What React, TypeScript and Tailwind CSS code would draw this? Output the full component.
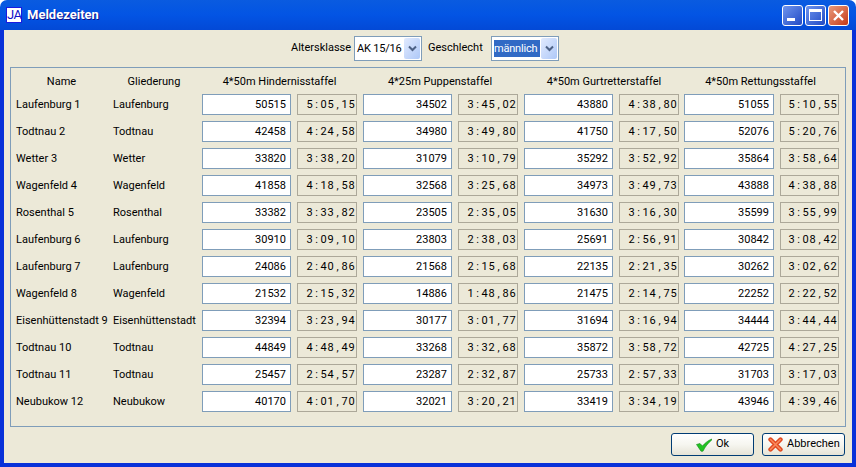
const rows = [
  ["Laufenburg 1", "Laufenburg", "50515", "5:05,15", "34502", "3:45,02", "43880", "4:38,80", "51055", "5:10,55"],
  ["Todtnau 2", "Todtnau", "42458", "4:24,58", "34980", "3:49,80", "41750", "4:17,50", "52076", "5:20,76"],
  ["Wetter 3", "Wetter", "33820", "3:38,20", "31079", "3:10,79", "35292", "3:52,92", "35864", "3:58,64"],
  ["Wagenfeld 4", "Wagenfeld", "41858", "4:18,58", "32568", "3:25,68", "34973", "3:49,73", "43888", "4:38,88"],
  ["Rosenthal 5", "Rosenthal", "33382", "3:33,82", "23505", "2:35,05", "31630", "3:16,30", "35599", "3:55,99"],
  ["Laufenburg 6", "Laufenburg", "30910", "3:09,10", "23803", "2:38,03", "25691", "2:56,91", "30842", "3:08,42"],
  ["Laufenburg 7", "Laufenburg", "24086", "2:40,86", "21568", "2:15,68", "22135", "2:21,35", "30262", "3:02,62"],
  ["Wagenfeld 8", "Wagenfeld", "21532", "2:15,32", "14886", "1:48,86", "21475", "2:14,75", "22252", "2:22,52"],
  ["Eisenhüttenstadt 9", "Eisenhüttenstadt", "32394", "3:23,94", "30177", "3:01,77", "31694", "3:16,94", "34444", "3:44,44"],
  ["Todtnau 10", "Todtnau", "44849", "4:48,49", "33268", "3:32,68", "35872", "3:58,72", "42725", "4:27,25"],
  ["Todtnau 11", "Todtnau", "25457", "2:54,57", "23287", "2:32,87", "25733", "2:57,33", "31703", "3:17,03"],
  ["Neubukow 12", "Neubukow", "40170", "4:01,70", "32021", "3:20,21", "33419", "3:34,19", "43946", "4:39,46"],
];

function Combo({ value, selected }: { value: string; selected?: boolean }) {
  return (
    <div className="w-[68px] h-[25px] bg-white border border-[#7f9db9] flex items-center pl-[2px] pr-[1px] gap-[1px]">
      <div className={`flex-1 h-[17px] leading-[17px] whitespace-nowrap tracking-[-0.2px] ${selected ? "bg-[#316ac5] text-white" : ""}`}>
        {value}
      </div>
      <div className="w-[16px] h-[21px] rounded-[2px] bg-gradient-to-br from-[#e1eafe] to-[#aec8f7] flex items-center justify-center">
        <svg width="9" height="7" viewBox="0 0 9 7">
          <path d="M1 1.5 L4.5 5 L8 1.5" fill="none" stroke="#4d6185" strokeWidth="2" />
        </svg>
      </div>
    </div>
  );
}

function Button({ label, icon, pad }: { label: string; icon: React.ReactNode; pad: string }) {
  return (
    <div className={`w-[83px] h-[23px] rounded-[3px] border border-[#003c74] bg-gradient-to-b from-white via-[#f6f6f0] to-[#e6e3d6] flex items-center gap-[4px] ${pad}`}>
      {icon}
      <span>{label}</span>
    </div>
  );
}

function Cell({ value, time, cls, inputCls, timeCls }: { value: string; time: string; cls: string; inputCls: string; timeCls: string }) {
  return (
    <div className={`flex gap-[6px] shrink-0 ${cls}`}>
      <div className={`h-[21px] bg-white border border-[#7f9db9] text-right pr-[4px] leading-[20px] ${inputCls}`}>
        {value}
      </div>
      <div className={`h-[21px] border border-[#aca899] flex justify-end pr-[1px] leading-[20px] ${timeCls}`}>
        {time.split("").map((ch, k) => (
          <span key={k} className="w-[7px] text-center">
            {ch}
          </span>
        ))}
      </div>
    </div>
  );
}

export default function App() {
  return (
    <div
      className="w-[856px] h-[467px] flex flex-col overflow-hidden text-[11px] text-black"
      style={{ fontFamily: 'Roboto, "Noto Sans", sans-serif' }}
    >
      <div className="h-[30px] shrink-0 rounded-t-[7px] bg-gradient-to-b from-[#0a5be0] via-[#0354e4] to-[#0349d6] flex items-center pl-[6px] pr-[7px] bg-[#0354e4]">
        <div className="w-[16px] h-[16px] bg-white border border-[#1a1ae0] text-[#1010c8] text-[13px] leading-[14px] text-center tracking-[-0.5px]">
          JA
        </div>
        <div className="ml-[5px] text-white font-bold text-[13px] [text-shadow:1px_1px_0_#0f1089]">Meldezeiten</div>
        <div className="ml-auto flex gap-[2px]">
          <div className="w-[21px] h-[21px] rounded-[3px] border border-white bg-gradient-to-br from-[#6f94ee] to-[#2349c4] flex items-end pl-[4px] pb-[4px]">
            <div className="w-[8px] h-[3px] bg-white" />
          </div>
          <div className="w-[21px] h-[21px] rounded-[3px] border border-white bg-gradient-to-br from-[#6f94ee] to-[#2349c4] flex items-center justify-center">
            <div className="w-[13px] h-[12px] border border-t-[3px] border-white" />
          </div>
          <div className="w-[21px] h-[21px] rounded-[3px] border border-white bg-gradient-to-br from-[#e8997a] to-[#c5350f] flex items-center justify-center">
            <svg width="13" height="13" viewBox="0 0 13 13">
              <path d="M2 2 L11 11 M11 2 L2 11" stroke="white" strokeWidth="2.4" />
            </svg>
          </div>
        </div>
      </div>

      <div className="flex-1 bg-[#ece9d8] border-x-[4px] border-b-[4px] border-[#0831d9] px-[6px] flex flex-col">
        <div className="h-[37px] shrink-0 flex items-start pt-[6px] pl-[281px]">
          <div className="w-[63px] h-[25px] flex items-center">Altersklasse</div>
          <Combo value="AK 15/16" />
          <div className="w-[69px] h-[25px] flex items-center pl-[6px]">Geschlecht</div>
          <Combo value="männlich" selected />
        </div>

        <div className="h-[360px] shrink-0 border border-[#7f9db9] pl-[5px] flex flex-col">
          <div className="h-[26px] shrink-0 flex items-center pt-[2px] whitespace-nowrap">
            <div className="w-[97px] shrink-0 text-center pr-[6px]">Name</div>
            <div className="w-[89px] shrink-0 text-center pr-[7px]">Gliederung</div>
            <div className="w-[155px] shrink-0 text-center">4*50m Hindernisstaffel</div>
            <div className="w-[161px] shrink-0 pl-[5px] text-center">4*25m Puppenstaffel</div>
            <div className="w-[161px] shrink-0 pl-[11px] text-center">4*50m Gurtretterstaffel</div>
            <div className="w-[150px] shrink-0 pl-[13px] text-center">4*50m Rettungsstaffel</div>
          </div>
          {rows.map((r, i) => (
            <div key={i} className="h-[21px] mb-[6px] shrink-0 flex items-center">
              <div className="w-[97px] shrink-0 whitespace-nowrap pt-[2px]">{r[0]}</div>
              <div className="w-[89px] shrink-0 whitespace-nowrap pt-[2px]">{r[1]}</div>
              <Cell value={r[2]} time={r[3]} cls="w-[161px]" inputCls="w-[89px]" timeCls="w-[60px]" />
              <Cell value={r[4]} time={r[5]} cls="w-[161px]" inputCls="w-[89px]" timeCls="w-[60px]" />
              <Cell value={r[6]} time={r[7]} cls="w-[160px]" inputCls="w-[89px]" timeCls="w-[60px]" />
              <Cell value={r[8]} time={r[9]} cls="w-[155px]" inputCls="w-[90px]" timeCls="w-[59px]" />
            </div>
          ))}
        </div>

        <div className="flex-1 flex justify-end items-start pt-[6px] gap-[8px] pr-[1px]">
          <Button
            label="Ok"
            pad="pl-[24px]"
            icon={
              <svg width="16" height="14" viewBox="0 0 16 14">
                <path d="M0.5 6.5 L4 5.5 L6.5 8 C9 5 12 2.5 15.8 1 L15.8 2 C12 5 9 9 7 13.2 L5 13.2 Z" fill="#22c322" stroke="#128a1a" strokeWidth="0.6" />
              </svg>
            }
          />
          <Button
            label="Abbrechen"
            pad="pl-[5px]"
            icon={
              <svg width="15" height="15" viewBox="0 0 15 15">
                <path d="M2.5 2.5 L12.5 12.5 M12.5 2.5 L2.5 12.5" stroke="#e0481f" strokeWidth="4.4" strokeLinecap="round" />
                <path d="M2.5 2.5 L12.5 12.5 M12.5 2.5 L2.5 12.5" stroke="#fb8a5c" strokeWidth="1.6" strokeLinecap="round" />
              </svg>
            }
          />
        </div>
      </div>
    </div>
  );
}
